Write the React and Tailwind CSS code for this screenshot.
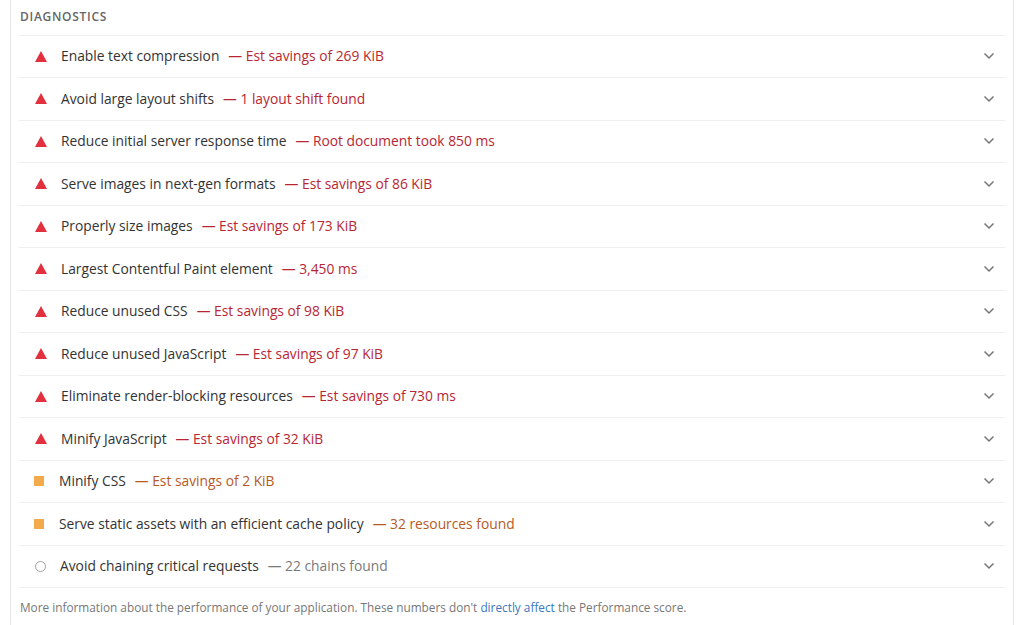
import React from 'react';

const audits = [
  { level: 'fail', title: 'Enable text compression', detail: 'Est savings of 269 KiB' },
  { level: 'fail', title: 'Avoid large layout shifts', detail: '1 layout shift found' },
  { level: 'fail', title: 'Reduce initial server response time', detail: 'Root document took 850 ms' },
  { level: 'fail', title: 'Serve images in next-gen formats', detail: 'Est savings of 86 KiB' },
  { level: 'fail', title: 'Properly size images', detail: 'Est savings of 173 KiB' },
  { level: 'fail', title: 'Largest Contentful Paint element', detail: '3,450 ms' },
  { level: 'fail', title: 'Reduce unused CSS', detail: 'Est savings of 98 KiB' },
  { level: 'fail', title: 'Reduce unused JavaScript', detail: 'Est savings of 97 KiB' },
  { level: 'fail', title: 'Eliminate render-blocking resources', detail: 'Est savings of 730 ms' },
  { level: 'fail', title: 'Minify JavaScript', detail: 'Est savings of 32 KiB' },
  { level: 'average', title: 'Minify CSS', detail: 'Est savings of 2 KiB' },
  { level: 'average', title: 'Serve static assets with an efficient cache policy', detail: '32 resources found' },
  { level: 'info', title: 'Avoid chaining critical requests', detail: '22 chains found' },
];

const detailColor = {
  fail: 'text-[#b82633]',
  average: 'text-[#b85a1f]',
  info: 'text-[#7a7a7a]',
};

const StatusIcon = ({ level }) => {
  if (level === 'fail') {
    return (
      <svg width="12" height="11" viewBox="0 0 12 11" className="shrink-0">
        <polygon points="6,0 12,11 0,11" fill="#e3303e" />
      </svg>
    );
  }
  if (level === 'average') {
    return <span className="block w-[10px] h-[10px] bg-[#f2aa4c] shrink-0 mr-[1px] -ml-[1px]" />;
  }
  return <span className="block w-[11px] h-[11px] rounded-full border border-[#a0a0a0] shrink-0" />;
};

const Chevron = () => (
  <svg width="12" height="8" viewBox="0 0 12 8" className="shrink-0">
    <path d="M1.5 1.5 L6 6 L10.5 1.5" fill="none" stroke="#767676" strokeWidth="1.5" />
  </svg>
);

const AuditRow = ({ level, title, detail }) => (
  <div className="flex items-center h-[42.5px] border-b border-[#efefef] pl-4 pr-[10px]">
    <StatusIcon level={level} />
    <div className="flex-1 ml-[14px] pt-[1px] text-[13.8px] text-[#333333] whitespace-nowrap">
      {title}
      <span className={`ml-[9px] ${detailColor[level]}`}>— {detail}</span>
    </div>
    <Chevron />
  </div>
);

export default function App() {
  return (
    <div className="w-[1024px] h-[625px] bg-white overflow-hidden" style={{ fontFamily: '"Open Sans", "Noto Sans", sans-serif' }}>
      <div className="ml-[10px] w-[1004px] h-full border-x border-[#e6e6e6] px-2">
        <div className="h-[35.5px] border-b border-[#efefef] flex items-center">
          <span className="ml-[1px] text-[12px] font-semibold tracking-[0.06em] text-[#666666]">DIAGNOSTICS</span>
        </div>
        {audits.map((a) => (
          <AuditRow key={a.title} {...a} />
        ))}
        <div className="pt-[11px] pl-[1px] text-[11.8px] text-[#777777]">
          More information about the performance of your application. These numbers don't{' '}
          <span className="text-[#3a78c2]">directly affect</span> the Performance score.
        </div>
      </div>
    </div>
  );
}
